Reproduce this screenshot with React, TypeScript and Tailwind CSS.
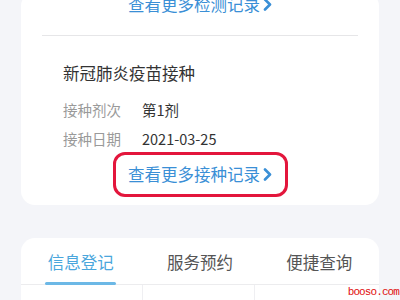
import React from "react";

const Chevron = () => (
  <svg width="9" height="13" viewBox="0 0 9 13" className="ml-[3px] shrink-0">
    <path d="M2 1.5 L7 6.5 L2 11.5" fill="none" stroke="#3a8fd6" strokeWidth="2.6" strokeLinecap="round" strokeLinejoin="round" />
  </svg>
);

export default function App() {
  const font = { fontFamily: '"Noto Sans CJK SC", "Noto Sans", sans-serif' };
  return (
    <div className="relative w-[400px] h-[300px] overflow-hidden bg-[#f4f5f9] px-[21px]" style={font}>
      <div className="mt-[-8px] bg-white rounded-[14px] pb-[8px]">
        <div className="h-[24px] flex items-center justify-center text-[16.5px] leading-[24px] text-[#3a8fd6]">
          <span>查看更多检测记录</span>
          <Chevron />
        </div>
        <div className="mx-[21px] mt-[19px] h-px bg-[#e6e6e8]" />
        <div className="mx-[42px] mt-[25px] text-[16.5px] leading-[24px] text-[#333]">新冠肺炎疫苗接种</div>
        <div className="mx-[42px] mt-[13px] flex text-[14.5px] leading-[24px]">
          <span className="w-[79px] text-[#9a9a9a]">接种剂次</span>
          <span className="text-[#333]">第1剂</span>
        </div>
        <div className="mx-[42px] mt-[5px] flex text-[14.5px] leading-[24px]">
          <span className="w-[79px] text-[#9a9a9a]">接种日期</span>
          <span className="text-[#333]">2021-03-25</span>
        </div>
        <div className="flex justify-center mt-[1px]">
          <div className="w-[175px] h-[45px] border-[3px] border-[#e3163c] rounded-[12px] flex items-center justify-center text-[16.5px] text-[#3a8fd6]">
            <span>查看更多接种记录</span>
            <Chevron />
          </div>
        </div>
      </div>
      <div className="mt-[33px] bg-white rounded-t-[14px]">
        <div className="grid grid-cols-3 h-[47px] border-b border-[#ececee]">
          <div className="relative flex items-center justify-center pt-[2px] text-[16.5px] text-[#4aa6dc]">
            信息登记
            <div className="absolute bottom-[-1px] left-[24px] w-[71px] h-[3px] rounded-full bg-[#6cb8e6]" />
          </div>
          <div className="flex items-center justify-center pt-[2px] text-[16.5px] text-[#555]">服务预约</div>
          <div className="flex items-center justify-center pt-[2px] text-[16.5px] text-[#555]">便捷查询</div>
        </div>
        <div className="grid grid-cols-[122px_112px_1fr] h-[20px]">
          <div className="border-r border-[#efeff2]" />
          <div className="border-r border-[#efeff2]" />
          <div />
        </div>
      </div>
      <div
        className="absolute right-[1px] bottom-[2px] text-[11px] leading-[12px] text-[#e01010] tracking-[-0.9px]"
        style={{ fontFamily: '"Liberation Mono", monospace' }}
      >
        booso.com
      </div>
    </div>
  );
}
